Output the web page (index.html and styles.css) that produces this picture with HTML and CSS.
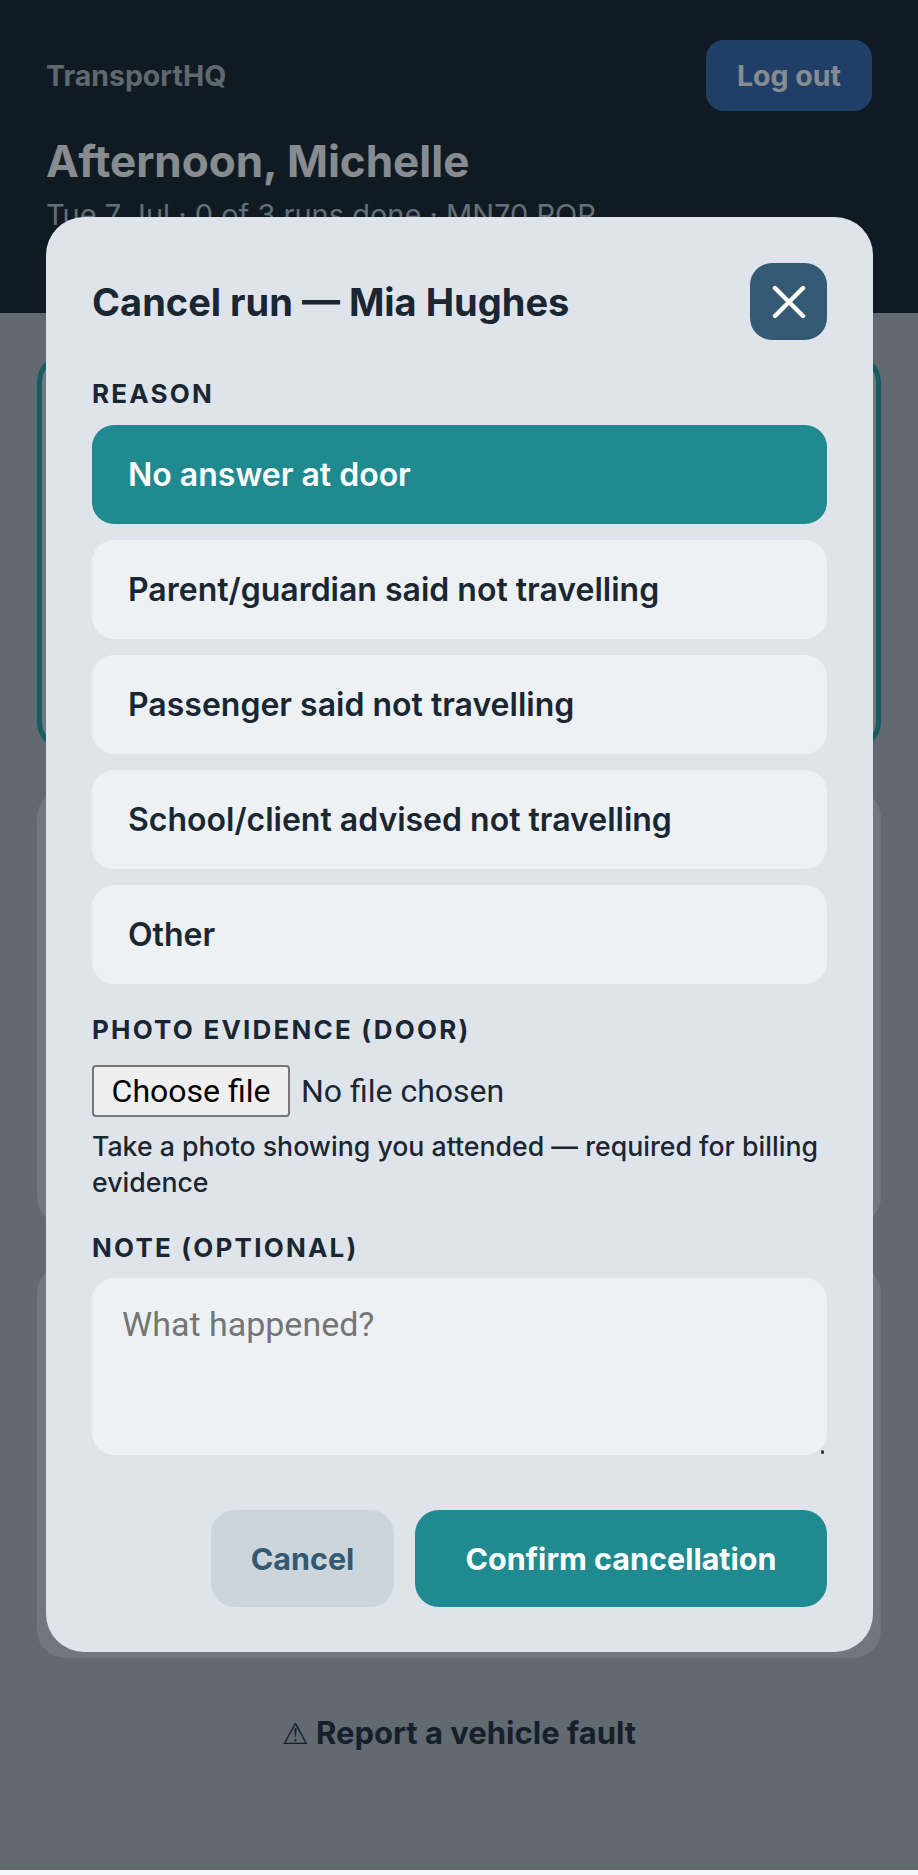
FILE: index.html
```html
<!DOCTYPE html>
<html lang="en">

<head>
    <meta charset="UTF-8">
    <meta name="viewport" content="width=device-width, initial-scale=1.0">
    <title>TransportHQ - Cancel run</title>
    <link rel="stylesheet" href="styles.css">
</head>

<body>
    <header class="top">
        <div class="top-row">
            <span class="brand">TransportHQ</span>
            <button type="button" class="logout-btn">Log out</button>
        </div>
        <h1>Afternoon, Michelle</h1>
        <p class="sub">Tue 7 Jul · 0 of 3 runs done · MN70 POP</p>
    </header>

    <main class="runs">
        <div class="run-card active"></div>
        <div class="run-card middle"></div>
        <div class="run-card last"></div>
        <a class="fault-link"><span class="warn">⚠</span> Report a vehicle fault</a>
    </main>

    <div class="overlay"></div>

    <div class="modal">
        <div class="modal-head">
            <h2>Cancel run — Mia Hughes</h2>
            <button type="button" class="close-btn" aria-label="Close">
                <svg width="34" height="34" viewBox="0 0 34 34">
                    <path d="M3 3 L31 31 M31 3 L3 31" stroke="#fff" stroke-width="4.4" stroke-linecap="round" />
                </svg>
            </button>
        </div>

        <div class="field-label reason-label">Reason</div>
        <div class="reasons">
            <button type="button" class="reason selected">No answer at door</button>
            <button type="button" class="reason">Parent/guardian said not travelling</button>
            <button type="button" class="reason">Passenger said not travelling</button>
            <button type="button" class="reason">School/client advised not travelling</button>
            <button type="button" class="reason">Other</button>
        </div>

        <div class="field-label photo-label">Photo evidence (door)</div>
        <div class="file-row">
            <button type="button" class="file-btn">Choose file</button>
            <span class="file-name">No file chosen</span>
        </div>
        <p class="hint">Take a photo showing you attended — required for billing evidence</p>

        <div class="field-label note-label">Note (optional)</div>
        <div class="note-wrap">
            <textarea class="note" placeholder="What happened?"></textarea>
            <span class="grip"></span>
        </div>

        <div class="actions">
            <button type="button" class="cancel-btn">Cancel</button>
            <button type="button" class="confirm-btn">Confirm cancellation</button>
        </div>
    </div>
</body>

</html>
```

FILE: styles.css
```css
* {
    margin: 0;
    padding: 0;
    box-sizing: border-box;
    font-family: 'Inter', 'Liberation Sans', sans-serif;
}

html {
    background: #f4f6f7;
}

body {
    background: #b5b9bd;
    height: 1870px;
    overflow: hidden;
    color: #1a2733;
}

button {
    border: none;
    cursor: pointer;
}

.top {
    height: 313px;
    background: #111b21;
    padding: 40px 46px 0;
}

.top-row {
    display: flex;
    justify-content: space-between;
    align-items: center;
}

.brand {
    color: #aeb4ba;
    font-size: 28.5px;
    font-weight: 700;
}

.logout-btn {
    width: 166px;
    height: 71px;
    background: #2f65ad;
    color: #fff;
    font-size: 28.5px;
    font-weight: 700;
    border-radius: 18px;
}

h1 {
    color: #fff;
    font-size: 44px;
    font-weight: 700;
    margin-top: 23px;
}

.sub {
    color: #b9c4ce;
    font-size: 29px;
    margin-top: 9px;
}

.runs {
    padding: 41px 37px 0;
}

.run-card {
    height: 396px;
    background: #d1d4d8;
    border-radius: 28px;
    margin-bottom: 40px;
}

.run-card.active {
    border: 5px solid #1f9ea0;
}

.run-card.middle {
    height: 435px;
}

.run-card.last {
    height: 393px;
}

.fault-link {
    display: block;
    text-align: center;
    margin-top: 56px;
    font-size: 31px;
    font-weight: 700;
}

.warn {
    font-family: 'DejaVu Sans', sans-serif;
    font-weight: 400;
    font-size: 30px;
}

.overlay {
    position: fixed;
    left: 0;
    right: 0;
    top: 0;
    height: 1870px;
    background: rgba(15, 25, 35, 0.5);
}

.modal {
    position: fixed;
    left: 46px;
    top: 217px;
    width: 827px;
    height: 1435px;
    background: #dfe4eb;
    border-radius: 38px;
    padding: 46px;
}

.modal-head {
    display: flex;
    justify-content: space-between;
    align-items: center;
    height: 77px;
}

h2 {
    font-size: 38px;
    font-weight: 700;
}

.close-btn {
    width: 77px;
    height: 77px;
    background: #335a72;
    border-radius: 22px;
    display: flex;
    align-items: center;
    justify-content: center;
}

.field-label {
    font-size: 26px;
    font-weight: 700;
    letter-spacing: 2.2px;
    text-transform: uppercase;
    line-height: 32px;
}

.reason-label {
    margin-top: 38px;
}

.reasons {
    display: flex;
    flex-direction: column;
    gap: 16px;
    margin-top: 15px;
}

.reason {
    height: 99px;
    background: #edf1f4;
    color: #1a2733;
    border-radius: 22px;
    padding: 0 36px;
    text-align: left;
    font-size: 32px;
    font-weight: 600;
}

.reason.selected {
    background: #1f8a8f;
    color: #fff;
}

.photo-label {
    margin-top: 30px;
}

.file-row {
    display: flex;
    align-items: center;
    gap: 11px;
    margin-top: 19px;
}

.file-btn {
    width: 198px;
    height: 52px;
    background: #efefef;
    border: 2px solid #767676;
    border-radius: 4px;
    font-family: 'Roboto', sans-serif;
    font-size: 32px;
    color: #000;
}

.file-name {
    font-family: 'Roboto', sans-serif;
    font-size: 32px;
    color: #1a2733;
}

.hint {
    font-size: 26.7px;
    line-height: 36px;
    margin-top: 11px;
    font-weight: 500;
}

.note-label {
    margin-top: 32px;
}

.note-wrap {
    position: relative;
    margin-top: 14px;
}

.note {
    display: block;
    width: 100%;
    height: 177px;
    background: #edf1f4;
    border: none;
    border-radius: 22px;
    padding: 26px 30px;
    font-family: 'Roboto', sans-serif;
    font-size: 34px;
    color: #1a2733;
    resize: none;
}

.grip {
    position: absolute;
    right: 3px;
    bottom: 1px;
    width: 3px;
    height: 4px;
    background: #333;
    border-radius: 2px;
}

.actions {
    display: flex;
    justify-content: flex-end;
    gap: 21px;
    margin-top: 55px;
}

.cancel-btn,
.confirm-btn {
    height: 97px;
    border-radius: 24px;
    font-size: 30.5px;
    font-weight: 700;
}

.cancel-btn {
    width: 183px;
    background: #cdd5dc;
    color: #335a72;
}

.confirm-btn {
    width: 412px;
    background: #1f8a8f;
    color: #fff;
}
```
